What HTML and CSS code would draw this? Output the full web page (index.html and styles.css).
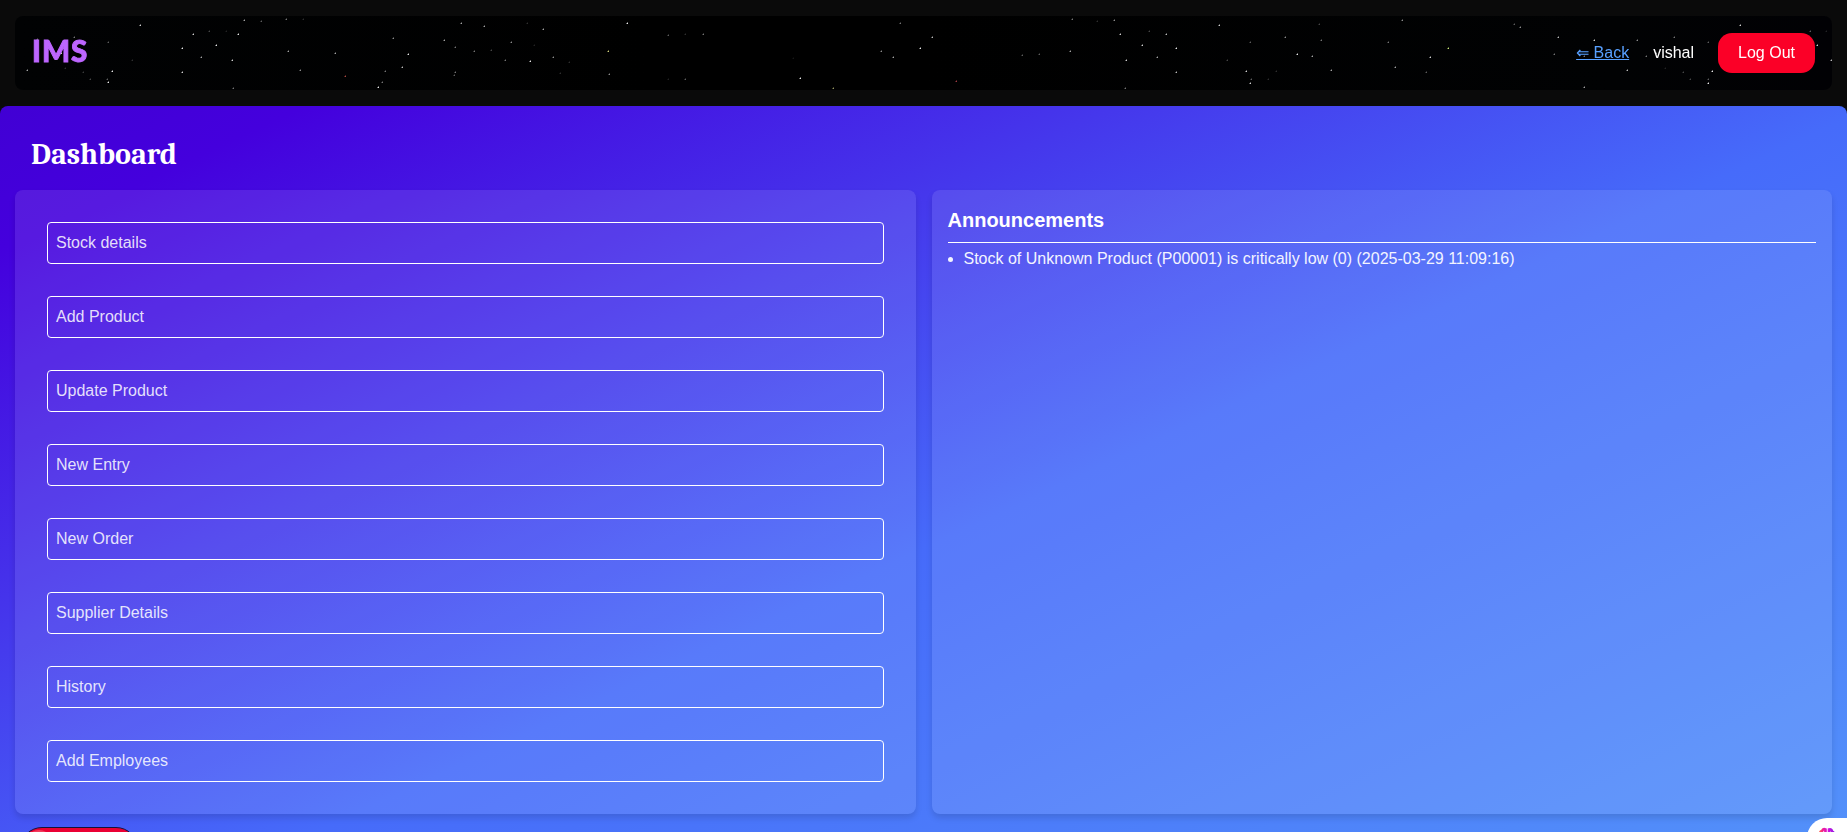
FILE: index.html
```html
<!DOCTYPE html>
<html lang="en">
<head>
<meta charset="utf-8">
<title>IMS Dashboard</title>
<link rel="stylesheet" href="styles.css">
</head>
<body>
<div class="page">
<header class="topbar">
  <canvas class="stars" id="stars" width="1817" height="74"></canvas>
  <div class="brand">IMS</div>
  <nav class="nav">
    <a class="back" href="#">⇐ Back</a>
    <span class="user">vishal</span>
    <button class="logout">Log Out</button>
  </nav>
</header>
<main class="main">
  <h1 class="title">Dashboard</h1>
  <div class="panels">
    <section class="panel menu">
      <a class="item">Stock details</a>
      <a class="item">Add Product</a>
      <a class="item">Update Product</a>
      <a class="item">New Entry</a>
      <a class="item">New Order</a>
      <a class="item">Supplier Details</a>
      <a class="item">History</a>
      <a class="item">Add Employees</a>
    </section>
    <section class="panel news">
      <h2 class="news-title">Announcements</h2>
      <ul class="news-list">
        <li>Stock of Unknown Product (P00001) is critically low (0) (2025-03-29 11:09:16)</li>
      </ul>
    </section>
  </div>
  <div class="pill"><span class="pill-shine"></span></div>
</main>
<div class="widget">
  <svg width="18" height="16" viewBox="0 0 18 16" fill="none" stroke-width="2.6" stroke-linecap="round">
    <defs><linearGradient id="g" gradientUnits="userSpaceOnUse" x1="0" y1="8" x2="18" y2="3"><stop offset="0" stop-color="#ff8a2a"/><stop offset=".3" stop-color="#f5208a"/><stop offset=".6" stop-color="#d010e0"/><stop offset="1" stop-color="#7a1fe0"/></linearGradient></defs>
    <path stroke="url(#g)" d="M2 10V6.500Q2 4.500 4 4Q5 1.500 7.500 2.500V12M4.500 7.500L7 5.500M11 12V2.500Q13.500 1.500 14 4.500Q16 5 16 8V11"/>
  </svg>
</div>
</div>
<script src="stars.js"></script>
</body>
</html>
```
FILE: stars.js
```js
// Each star: x, y, brightness, optional rgb tint.
const stars = [
[140,25,.9],[27,70,.7],[74,37,.5],[37,39,.5],[108,42,.4],[112,71,1],[108,82,1],[107,79,.4],[90,79,.3],[83,72,.25],[65,68,.2],[61,53,.9],[132,60,.2],
[193,34,.9],[209,31,.3],[226,31,.15],[238,34,1],[244,20,.7],[261,21,.4],[286,19,.5],[303,19,.2],[182,48,1],[216,45,1],[201,57,.7],[232,60,.9],[182,72,.9],[233,88,.5],
[288,51,.7],[300,70,.6],[335,53,.7],[345,76,.9,"210,90,80"],[378,87,1],[382,82,.5],[385,71,.5],[402,67,.8],[408,54,1],[393,38,.6],[444,40,.7],[455,47,.5],[461,23,.7],
[474,51,.5],[491,50,.3],[484,26,.7],[455,72,.5],[454,75,.4],[505,60,.5],[511,42,.6],[530,61,1],[527,23,.2],[543,29,.7],[534,45,.15],[553,57,.6],[569,62,.2],[560,73,.2],
[627,23,1],[608,51,.9,"255,255,150"],[609,74,.6],[668,35,.4],[685,34,.2],[703,34,.5],[685,79,.4],[668,79,.15],[800,78,1],[833,88,.7,"235,235,150"],[793,58,.1],
[881,51,.6],[893,57,.7],[900,23,.5],[920,48,1],[932,37,.8],[956,81,.8,"220,80,90"],[1022,55,.4],[1039,54,.4],[1070,51,.7],[1072,19,.5],[1097,21,.2],[1114,20,.6],[1120,34,.9],
[1149,31,.3],[1166,34,.8],[1142,45,.9],[1176,48,1],[1157,57,.7],[1126,60,.9],[1176,72,.8],[1125,88,.5],[1219,25,.9],[1227,60,.3],
[1285,37,.6],[1321,40,.5],[1319,24,.3],[1250,42,.4],[1297,54,1],[1312,56,.7],[1246,71,.9],[1250,83,.9],[1251,79,.4],[1268,79,.2],[1276,71,.2],[1331,70,.7],[1388,42,.5],[1395,67,.7],
[1402,20,.6],[1426,72,.4],[1430,57,.9],[1448,48,1,"220,255,130"],[1514,24,.4],[1520,27,.6],[1558,37,.8],[1554,54,.5],[1594,40,.9],[1584,56,.5],[1584,87,.7],[1627,70,.8],[1637,40,.6],
[1646,56,.5],[1656,53,.5],[1674,37,.5],[1683,72,.3],[1712,71,1],[1708,83,1],[1708,79,.4],[1690,79,.3],[1665,68,.15],[1708,42,.4],[1740,25,.9],[1810,31,.4],[1826,31,.15],[1817,45,.9],[1831,60,.8]
];
const ctx = document.getElementById("stars").getContext("2d");
for (const [x, y, a, rgb = "255,255,255"] of stars) {
  ctx.fillStyle = `rgba(${rgb},${a * 0.9})`;
  ctx.fillRect(x - 15, y - 16, 1, 1);
  ctx.fillStyle = `rgba(${rgb},${a * 0.4})`;
  ctx.fillRect(x - 15, y - 17, 1, 1);
  ctx.fillRect(x - 16, y - 16, 1, 1);
}
```
FILE: styles.css
```css
* { box-sizing: border-box; }
body {
  margin: 0;
  background: #0a0a0a;
  color: #fff;
  font: 16px/24px "Liberation Sans", Arial, sans-serif;
}
.page {
  position: relative;
  display: flex;
  flex-direction: column;
  height: 100vh;
  padding-top: 16px;
  overflow: hidden;
}
.topbar {
  position: relative;
  display: flex;
  flex: none;
  align-items: center;
  justify-content: space-between;
  height: 74px;
  margin: 0 15px 16px;
  padding: 0 17px;
  border-radius: 8px;
  background: linear-gradient(90deg, #010203, #000 35%, #000 50%, #010203 88%, #010104);
  overflow: hidden;
}
.stars { position: absolute; left: 0; top: 0; }
.brand {
  position: relative;
  margin-bottom: 5px;
  color: #bd66ff;
  font: 900 29.5px/36px Lato, sans-serif;
  letter-spacing: 1px;
  -webkit-text-stroke: .9px #bd66ff;
}
.nav { position: relative; display: flex; align-items: center; gap: 24px; }
.back { color: #58a0ff; text-decoration: underline; }
.logout {
  height: 40px;
  padding: 0 20px;
  border: 0;
  border-radius: 14px;
  background: #fb0027;
  color: #fff;
  font: inherit;
}
.main {
  flex: 1;
  min-height: 0;
  padding: 31px 15px 0;
  border-radius: 8px 8px 0 0;
  background: linear-gradient(155deg, #4100d4 0, #4400dd 129px, #466bfa 792px, #5494fa 1500px);
  overflow: hidden;
}
.title {
  margin: 0 0 17px;
  padding-left: 16px;
  font: bold 30px/36px Caladea, Cambria, "Liberation Serif", serif;
}
.panels { display: grid; grid-template-columns: 1fr 1fr; gap: 16px; }
.panel {
  border-radius: 8px;
  background: rgba(255, 255, 255, .1);
  box-shadow: 0 4px 6px rgba(0, 0, 0, .12);
}
.menu { display: flex; flex-direction: column; gap: 32px; padding: 32px; }
.item {
  padding: 8px;
  border: 1px solid #fff;
  border-radius: 4px;
  color: rgba(255, 255, 255, .86);
}
.news { padding: 16px; }
.news-title {
  margin: 0;
  padding-bottom: 8px;
  border-bottom: 1px solid #fff;
  font-size: 20px;
  line-height: 28px;
}
.news-list { margin: 4px 0 0; padding-left: 16px; color: #f3f4ff; }
.pill {
  width: 118px;
  height: 44px;
  margin: 13px 0 0 5px;
  padding: 2px 8px;
  border: 1px solid #14143a;
  border-radius: 22px;
  background: #ea0034;
}
.pill-shine {
  display: block;
  width: 20px;
  height: 14px;
  border-radius: 50%;
  background: #f23a5c;
}
.widget {
  position: absolute;
  right: 0;
  top: 818px;
  width: 40px;
  height: 40px;
  padding: 8px 0 0 11px;
  border-radius: 20px 0 0 20px;
  background: #fff;
}
```
